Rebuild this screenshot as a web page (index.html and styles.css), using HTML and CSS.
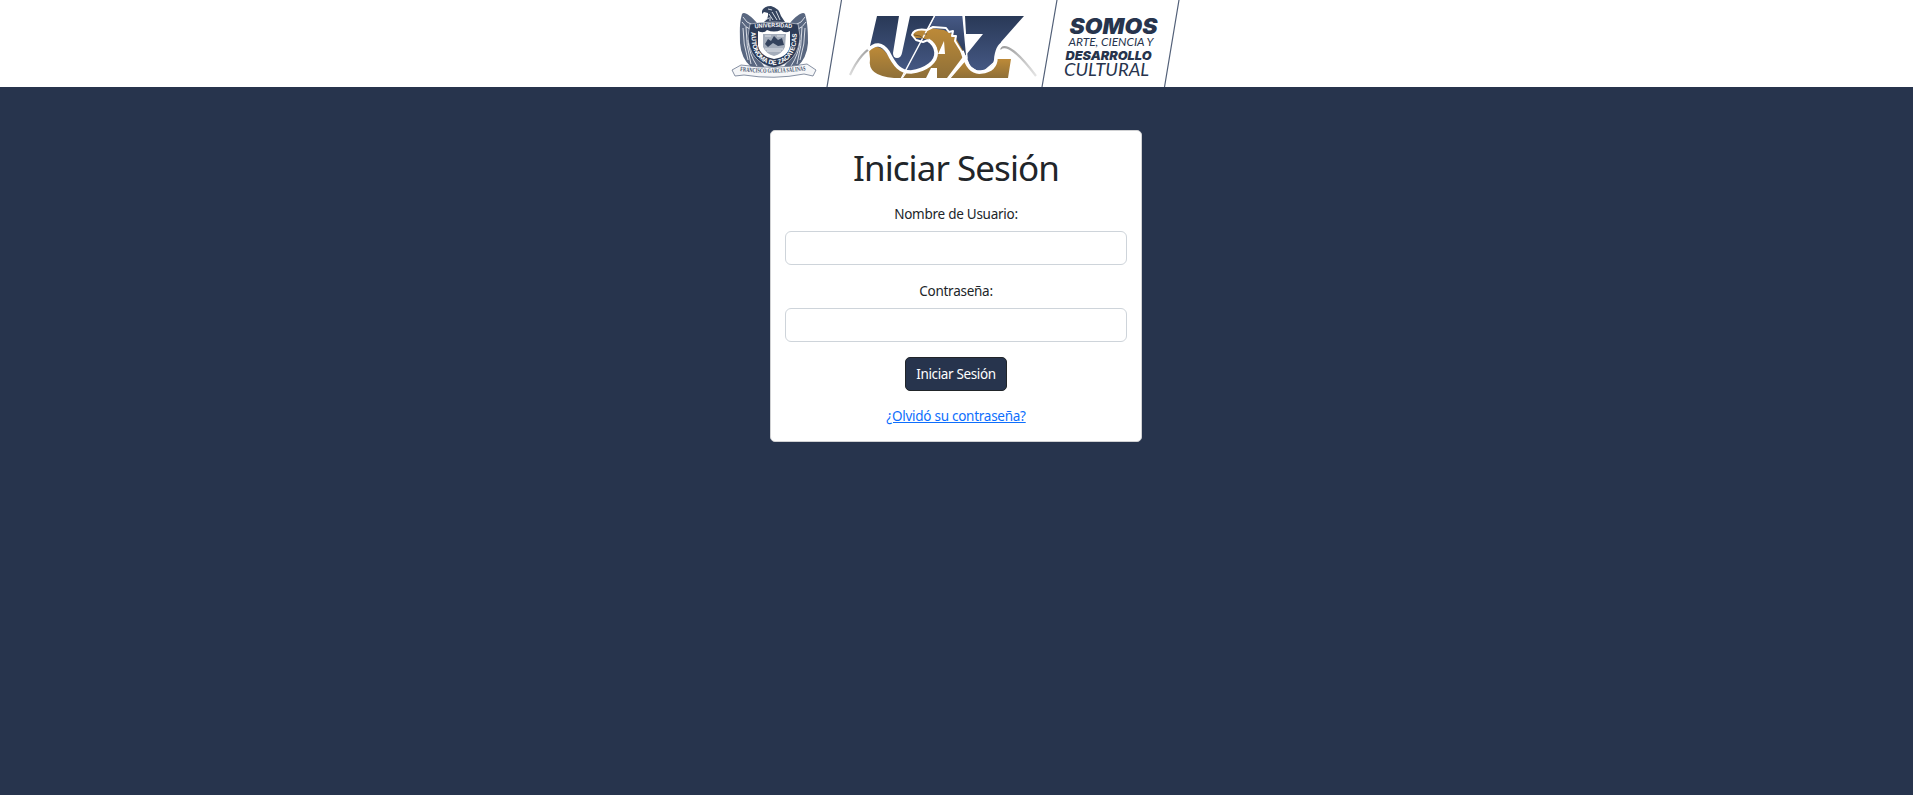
FILE: index.html
```html
<!DOCTYPE html>
<html lang="es">
<head>
<meta charset="utf-8">
<title>Iniciar Sesión</title>
<link rel="stylesheet" href="styles.css">
</head>
<body>
<header class="banner">
<svg class="banner-art" viewBox="720 0 470 87" width="470" height="87" role="img" aria-label="Universidad Autónoma de Zacatecas">
  <defs>
    <linearGradient id="blue" x1="0" y1="0" x2="0" y2="1"><stop offset="0" stop-color="#293957"/><stop offset="1" stop-color="#465985"/></linearGradient>
    <linearGradient id="blueR" x1="0" y1="1" x2="0" y2="0"><stop offset="0" stop-color="#293957"/><stop offset="1" stop-color="#465985"/></linearGradient>
    <linearGradient id="gold" x1="0" y1="0" x2="0" y2="1"><stop offset="0" stop-color="#bd8a38"/><stop offset="1" stop-color="#8f7038"/></linearGradient>
    <linearGradient id="tailL" x1="850" y1="76" x2="872" y2="46" gradientUnits="userSpaceOnUse"><stop offset="0" stop-color="#ddd"/><stop offset="1" stop-color="#999"/></linearGradient>
    <linearGradient id="tailR" x1="1000" y1="46" x2="1037" y2="76" gradientUnits="userSpaceOnUse"><stop offset="0" stop-color="#999"/><stop offset="1" stop-color="#e5e5e5"/></linearGradient>
    <path id="topArc" d="M755 28.500 Q774 25.500 793 28.500"/>
    <path id="ringArc" d="M751 32 L752 44 Q756 63 774 65 Q792 63 796 44 L797 32"/>
    <path id="ribbon" d="M740 71 Q773 75 808 70"/>
  </defs>
  <g class="rules">
    <path d="M841.500 0L827 87M1057 0L1042 87M1179 0L1164.500 87"/>
  </g>
  <g class="crest">
    <path class="wing" d="M757 23C750 15 744 11 742 14C739 24 740 34 740 43Q741 58 751 67L765 68L756 54L754 29Z"/>
    <path class="wing" d="M790 23C797 15 803 11 805 14C808 24 808 34 808 43Q807 58 797 67L783 68L793 54L795 29Z"/>
    <path class="feather" d="M743 17Q746 23 753 25M742 22Q746 28 750 29M743 28Q743 44 748 60M746 27Q746 46 751 64M748 40Q749 54 757 66M805 17Q802 23 795 25M806 22Q802 28 798 29M805 28Q805 44 800 60M802 27Q802 46 797 64M800 40Q799 54 791 66"/>
    <path class="head" d="M762 11Q764 6 771 6Q779 8 781 16L785 22L764 22Q769 18 768 13L764 12L762 14Z"/>
    <path class="feather" d="M768 9L772 10M769 14L773 20M772 12L777 20M776 11L780 20M765 20L769 18M770 17L770 21"/>
    <path class="shield" d="M750 24Q774 20 798 24L800 36Q799 62 774 68Q749 62 748 36Z"/>
    <path class="field" d="M758 31Q764 34 767 30Q774 33 781 30Q785 34 790 31L790 46Q788 57 774 59Q761 57 758 46Z"/>
    <path class="arms" d="M763 34L786 34L785 47Q782 54 774 56Q766 54 763 47Z"/>
    <path class="hill" d="M765 44L768 39L771 41L774 36L778 40L782 38L784 45L778 46L773 43L768 47Z"/>
    <path class="feather" d="M765 49L783 49M767 51L781 51M765 36L771 36M777 36L784 36"/>
    <text class="crest-text"><textPath href="#topArc" textLength="37" lengthAdjust="spacingAndGlyphs">UNIVERSIDAD</textPath></text>
    <text class="crest-text crest-ring"><textPath href="#ringArc" textLength="88">AUTONOMA DE ZACATECAS</textPath></text>
    <path class="band" d="M732 70L741 65Q774 70 807 64L816 70L813 76L804 74Q774 80 744 75L735 76Z"/>
    <text class="ribbon-text"><textPath href="#ribbon" textLength="66" lengthAdjust="spacingAndGlyphs">FRANCISCO GARCIA SALINAS</textPath></text>
  </g>
  <g>
    <path fill="url(#blue)" d="M877 16H899L893 53Q893 58 897 58Q901 58 902 53L910 16H934L927 30L930 40Q938 47 937 56Q932 71 913 73Q902 73 895 66L880 60L870 46Z"/>
    <path fill="url(#blueR)" d="M935 16H963L967 57L949 34L929 28Z"/>
    <path fill="url(#blue)" d="M965 16H1024L1001 42L996 60L981 73L970 66L966 55L983 34H966Z"/>
    <path fill="url(#gold)" d="M869 49Q880 42 889 57Q896 67 906 71L902 78H894Q867 76 870 59Z"/>
    <path fill="url(#gold)" d="M912 34Q914 29 921 30L930 28L944 30L954 35L965 54L947 78H937V68H931L926 78H903L908 71Q933 69 938 53L936 46L930 40L920 38L913 38ZM944 41L938 54H945Z"/>
    <path fill="url(#gold)" d="M950 77L966 60Q972 72 981 73Q991 71 995 59H1011L1008 78H950Z"/>
    <path fill="none" stroke="url(#tailL)" stroke-width="2.200" d="M850 75Q861 51 876 45"/>
    <path fill="none" stroke="url(#tailR)" stroke-width="2.200" d="M1000 49Q1009 40 1036 76"/>
    <path class="snake" d="M868 50Q879 39 888 52C895 66 900 72 911 72C926 70 937 62 936 52Q935 44 928 40M962 51C967 67 972 73 981 72C991 71 996 66 996 57Q998 44 1005 43"/>
    <path class="snake-edge" d="M928 40L923 42L916 40L912 35Q914 28 927 30L933 27L946 28L949 32L953 31L952 36L956 36L955 41L963 54"/>
    <path class="cut" d="M935 15L901 79M963 15L967 58L949 79"/>
    <path class="eye" d="M914 35L920 36L924 39M924 34L927 34"/>
  </g>
  <g class="motto">
    <text class="bold" x="1069.500" y="33.500" font-size="21" textLength="88" lengthAdjust="spacingAndGlyphs">SOMOS</text>
    <text x="1068.500" y="45.800" font-size="11" textLength="85" lengthAdjust="spacingAndGlyphs">ARTE, CIENCIA Y</text>
    <text class="bold" x="1065.500" y="59.500" font-size="12.300" textLength="86" lengthAdjust="spacingAndGlyphs">DESARROLLO</text>
    <text x="1064" y="76" font-size="16.500" textLength="85" lengthAdjust="spacingAndGlyphs">CULTURAL</text>
  </g>
</svg>
</header>
<main class="page">
<form class="card">
  <h1 class="title">Iniciar Sesión</h1>
  <label class="label" for="user">Nombre de Usuario:</label>
  <input class="field-input" id="user" type="text">
  <label class="label" for="pass">Contraseña:</label>
  <input class="field-input" id="pass" type="password">
  <button class="submit" type="button">Iniciar Sesión</button>
  <a class="forgot" href="#">¿Olvidó su contraseña?</a>
</form>
</main>
</body>
</html>
```
FILE: styles.css
```css
* { box-sizing: border-box; }
body {
  margin: 0;
  min-height: 795px;
  background: #27344d;
  color: #212529;
  font: 13.5px/21px "Noto Sans", sans-serif;
  letter-spacing: -.26px;
}
.banner {
  display: flex;
  justify-content: center;
  height: 87px;
  padding-right: 3px;
  background: #fff;
  letter-spacing: 0;
}
.banner-art { display: block; }
.rules path { fill: none; stroke: #526078; stroke-width: 1.2; }
.crest { fill: #34435e; }
.wing { fill: #596780; }
.feather { fill: none; stroke: #e7eaf0; stroke-width: .9; }
.shield { fill: #2c3b57; stroke: #dfe3e9; stroke-width: .6; }
.field { fill: #fff; }
.arms { fill: #a4adbb; }
.hill { fill: #34435e; }
.crest-text { fill: #fff; font: bold 6px "Liberation Sans", sans-serif; }
.crest-ring { font-size: 6.5px; }
.band { fill: #f5f6f8; stroke: #68758c; stroke-width: .8; }
.ribbon-text { fill: #43516b; font: bold 6.5px "Liberation Serif", serif; }
.snake, .snake-edge { fill: none; stroke: #fff; stroke-width: 3.6; stroke-linejoin: round; }
.snake-edge { stroke-width: 2; }
.cut { fill: none; stroke: #fff; stroke-width: 1.5; }
.eye { fill: none; stroke: #76572a; stroke-width: 1; }
.motto { fill: #27344d; font-family: Lato, sans-serif; font-style: italic; }
.bold { font-family: Inter, sans-serif; font-weight: 900; }
.page { display: flex; justify-content: center; padding: 43px 1px 0 0; }
.card {
  display: flex;
  flex-direction: column;
  align-items: center;
  width: 372px;
  height: 312px;
  padding: 14px;
  background: #fff;
  border: 1px solid #d0d1d3;
  border-radius: 5px;
}
.title {
  margin: 0 0 13px;
  font-size: 35px;
  line-height: 46px;
  font-weight: 400;
  letter-spacing: -.95px;
}
.label { margin-bottom: 6px; }
.field-input {
  width: 342px;
  height: 34px;
  margin: 0 0 16px;
  padding: 5px 10px;
  border: 1px solid #ced4da;
  border-radius: 6px;
  background: #fff;
  font: inherit;
}
.submit {
  width: 102px;
  height: 34px;
  margin: -1px 0 15px;
  padding: 1px 0 0;
  border: 1px solid #212529;
  border-radius: 5px;
  background: #27344d;
  color: #fff;
  font: inherit;
  letter-spacing: -.36px;
}
.forgot { color: #0d6efd; text-underline-offset: 1px; }
```
